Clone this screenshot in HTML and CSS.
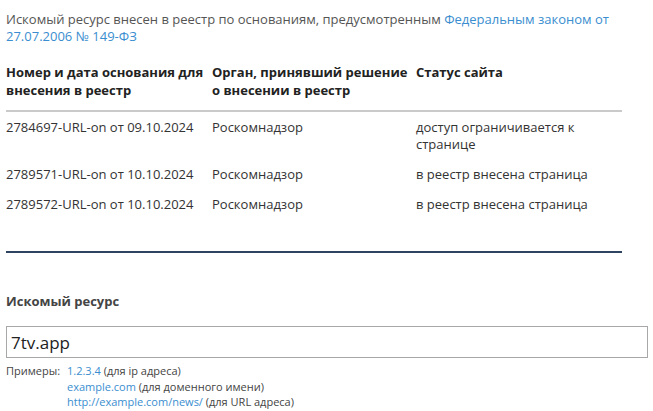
FILE: index.html
```html
<!DOCTYPE html>
<html lang="ru">
<head>
    <meta charset="UTF-8">
    <title>Проверка ресурса</title>
    <link rel="stylesheet" href="styles.css">
</head>
<body>
    <div class="page">
        <div class="result">
            <p class="intro">Искомый ресурс внесен в реестр по основаниям, предусмотренным <a href="#">Федеральным законом от 27.07.2006 № 149-ФЗ</a></p>
            <table class="registry">
                <thead>
                    <tr>
                        <th class="col-num">Номер и дата основания для внесения в реестр</th>
                        <th class="col-org">Орган, принявший решение о внесении в реестр</th>
                        <th>Статус сайта</th>
                    </tr>
                </thead>
                <tbody>
                    <tr>
                        <td>2784697-URL-on от 09.10.2024</td>
                        <td>Роскомнадзор</td>
                        <td>доступ ограничивается к странице</td>
                    </tr>
                    <tr>
                        <td>2789571-URL-on от 10.10.2024</td>
                        <td>Роскомнадзор</td>
                        <td>в реестр внесена страница</td>
                    </tr>
                    <tr>
                        <td>2789572-URL-on от 10.10.2024</td>
                        <td>Роскомнадзор</td>
                        <td>в реестр внесена страница</td>
                    </tr>
                </tbody>
            </table>
        </div>
        <form class="search" action="javascript:;">
            <label class="search-label" for="resource">Искомый ресурс</label>
            <input class="search-input" id="resource" value="7tv.app">
            <div class="examples">
                <span class="examples-title">Примеры:</span>
                <ul class="examples-list">
                    <li><a href="#">1.2.3.4</a> (для ip адреса)</li>
                    <li><a href="#">example.com</a> (для доменного имени)</li>
                    <li><a href="#">http://example.com/news/</a> (для URL адреса)</li>
                </ul>
            </div>
        </form>
    </div>
</body>
</html>
```

FILE: styles.css
```css
body {
    margin: 0;
    background: #fff;
    font-family: "Open Sans", "Liberation Sans", sans-serif;
    font-size: 13px;
    color: #333;
}

a {
    color: #3a8ed0;
    text-decoration: none;
}

.page {
    padding: 11px 6px 0;
}

.result {
    width: 616px;
    border-bottom: 2px solid #2d4360;
    padding-bottom: 32px;
}

.intro {
    margin: 0 0 18px;
    line-height: 17px;
    color: #555;
}

.registry {
    width: 100%;
    border-collapse: collapse;
    line-height: 17px;
}
.registry th {
    text-align: left;
    font-weight: bold;
    color: #222;
    padding: 0 0 11px;
    vertical-align: top;
    line-height: 18px;
}
.registry thead tr {
    border-bottom: 2px solid #cacaca;
}
.registry td {
    padding: 7px 0 6px;
    vertical-align: top;
    color: #333;
}
.col-num {
    width: 206px;
}
.col-org {
    width: 204px;
}

.search {
    padding-top: 39px;
}
.search-label {
    display: block;
    font-weight: bold;
    color: #444;
    line-height: 18px;
    margin-bottom: 16px;
}
.search-input {
    display: block;
    box-sizing: border-box;
    width: 642px;
    height: 32px;
    margin: 0;
    padding: 0 4px;
    border: 1px solid #a8a8a8;
    font-family: inherit;
    font-size: 17px;
    color: #222;
    outline: none;
}

.examples {
    display: flex;
    font-size: 11px;
    line-height: 15.5px;
    color: #444;
    padding-top: 5px;
}
.examples-title {
    width: 61px;
}
.examples-list {
    list-style: none;
    margin: 0;
    padding: 0;
}
```
